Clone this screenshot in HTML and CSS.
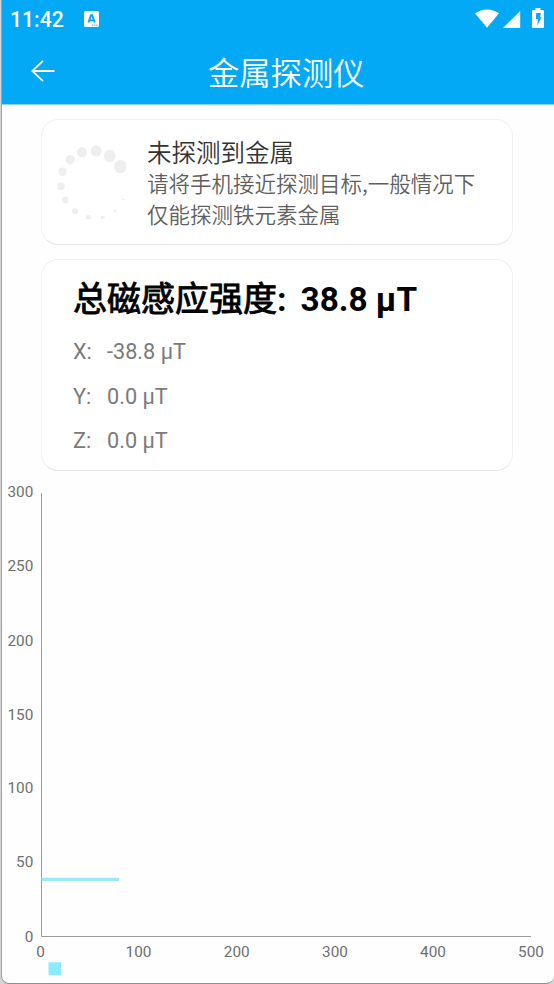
FILE: index.html
```html
<!DOCTYPE html>
<html lang="zh-CN">
<head>
    <meta charset="UTF-8">
    <meta name="viewport" content="width=device-width, initial-scale=1.0">
    <title>金属探测仪</title>
    <link rel="stylesheet" href="styles.css">
</head>
<body>
    <div class="phone">
        <header class="header">
            <div class="status-bar">
                <span class="clock">11:42</span>
                <svg class="icon-notice" width="15" height="16" viewBox="0 0 15 16">
                    <rect width="15" height="16" rx="1.5" fill="#fff"/>
                    <path d="M4.4 11.5 7 4.3h1.2l2.6 7.2M5.4 9.4h4.4" fill="none" stroke="#03a9f4" stroke-width="1.9"/>
                    <path d="M8 14.2h1.3M10.2 14.2h1.3M12.3 14.2h1.3" stroke="#03a9f4" stroke-width="1"/>
                </svg>
                <div class="status-icons">
                    <svg width="70" height="22" viewBox="0 0 70 22">
                        <path d="M0 5.3C7 .2 17 .2 24 5.3L12 19.7z" fill="#fff"/>
                        <path d="M28 20 45.2 3V20z" fill="#fff"/>
                        <path d="M58 2h2.5V0h5v2H68q1 0 1 1v16q0 1-1 1h-10q-1 0-1-1V3q0-1 1-1z" fill="#fff"/>
                        <path d="M61.2 5h4.8l-1.2 4.3h1.7L62.3 17.5l.6-6.5h-2z" fill="#03a9f4"/>
                    </svg>
                </div>
            </div>
            <div class="title-bar">
                <svg class="icon-back" width="24" height="22" viewBox="0 0 24 22">
                    <path d="M12 .8 1.3 11 12 21.2M1.3 11H23.5" fill="none" stroke="#fff" stroke-width="1.8"/>
                </svg>
                <h1 class="title">金属探测仪</h1>
            </div>
        </header>

        <main class="content">
            <section class="card card-status">
                <svg class="spinner" width="72" height="76" viewBox="0 0 72 76">
                    <g fill="#eee">
                        <ellipse cx="63.3" cy="21.5" rx="6.2" ry="6.7"/>
                        <ellipse cx="52.7" cy="11" rx="5.8" ry="6.2"/>
                        <ellipse cx="39.2" cy="6" rx="5.4" ry="5.8"/>
                        <ellipse cx="25" cy="7.3" rx="5" ry="5.3"/>
                        <ellipse cx="13.2" cy="14.7" rx="4.5" ry="4.8"/>
                        <ellipse cx="5.5" cy="26.7" rx="4" ry="4.3"/>
                        <ellipse cx="4" cy="41.2" rx="3.8" ry="3.8"/>
                        <ellipse cx="8.3" cy="55" rx="3.3" ry="3.4"/>
                        <ellipse cx="18.2" cy="66.3" rx="3" ry="3"/>
                        <ellipse cx="31.2" cy="72.2" rx="2.5" ry="2.2"/>
                        <ellipse cx="45.7" cy="72.2" rx="2" ry="1.8"/>
                        <ellipse cx="58" cy="66" rx="1.4" ry="1.4"/>
                        <ellipse cx="66.4" cy="54.4" rx="1.3" ry=".8"/>
                    </g>
                </svg>
                <div class="status-text">
                    <h2 class="status-title">未探测到金属</h2>
                    <p class="status-desc">请将手机接近探测目标,一般情况下仅能探测铁元素金属</p>
                </div>
            </section>

            <section class="card card-values">
                <div class="total">
                    <span class="total-label">总磁感应强度<b>:</b></span>
                    <span class="total-value">38.8 μT</span>
                </div>
                <div class="axis-row"><span class="axis-name">X:</span><span>-38.8 μT</span></div>
                <div class="axis-row"><span class="axis-name">Y:</span><span>0.0 μT</span></div>
                <div class="axis-row"><span class="axis-name">Z:</span><span>0.0 μT</span></div>
            </section>
        </main>

        <svg class="chart" width="552" height="505" viewBox="2 478 552 505">
            <path d="M41.5 493V936.5H531" fill="none" stroke="#9b9b9b" stroke-width="1"/>
            <g text-anchor="end">
                <text x="33.3" y="497.3">300</text>
                <text x="33.3" y="571.3">250</text>
                <text x="33.3" y="645.5">200</text>
                <text x="33.3" y="719.5">150</text>
                <text x="33.3" y="793.4">100</text>
                <text x="33.3" y="867.3">50</text>
                <text x="33.3" y="941.5">0</text>
            </g>
            <g text-anchor="middle">
                <text x="40.5" y="957.2">0</text>
                <text x="138.5" y="957.2">100</text>
                <text x="236.7" y="957.2">200</text>
                <text x="335" y="957.2">300</text>
                <text x="433" y="957.2">400</text>
                <text x="531" y="957.2">500</text>
            </g>
            <path d="M41.5 879.4H119" stroke="#9ae9fb" stroke-width="3.2"/>
            <rect x="48.5" y="962.3" width="12.5" height="12.7" fill="#8ceaff"/>
        </svg>
    </div>
</body>
</html>
```

FILE: styles.css
```css
* {
    box-sizing: border-box;
    margin: 0;
    padding: 0;
}

body {
    background: #d4d4d4;
    font-family: Roboto, "Noto Sans CJK SC", sans-serif;
}

.phone {
    height: 984px;
    margin-left: 1px;
    border-left: 1px solid #a2a2a2;
    border-bottom: 1px solid #8f8f8f;
    border-radius: 0 0 8px 8px;
    background: #fefefe;
    overflow: hidden;
}

.header {
    height: 105px;
    background: #03a9f4;
    border-bottom: 1px solid #8fd4f5;
    color: #fff;
}

.status-bar {
    display: flex;
    align-items: center;
    height: 38px;
    padding: 0 9px 0 8px;
}

.clock {
    width: 75px;
    padding-top: 1px;
    font-size: 21.2px;
    font-weight: 500;
    line-height: 38px;
}

.icon-notice {
    margin-left: -1px;
}

.status-icons {
    display: flex;
    margin: -1px 0 0 auto;
}

.title-bar {
    display: flex;
    align-items: center;
    height: 66px;
    padding-left: 29px;
}

.title {
    margin-left: 153px;
    padding-top: 2px;
    font-family: "Noto Sans CJK SC", sans-serif;
    font-size: 31.3px;
    font-weight: 350;
    line-height: 60px;
}

.content {
    display: flex;
    flex-direction: column;
    gap: 14px;
    padding: 14px 41px 0 39px;
}

.card {
    border: 1px solid #f1f1f1;
    border-bottom-color: #e6e6e6;
    border-radius: 17px;
    background: #fff;
}

.card-status {
    display: flex;
    height: 126px;
    padding: 16px 30px 0 15px;
}

.spinner {
    flex: none;
    margin-top: 9px;
}

.status-text {
    margin-left: 18px;
    font-family: "Noto Sans CJK SC", sans-serif;
}

.status-title {
    color: #333;
    font-size: 24.5px;
    font-weight: 350;
    line-height: 31px;
}

.status-desc {
    width: 335px;
    color: #5f5f5f;
    font-size: 21.5px;
    font-weight: 350;
    line-height: 31px;
}

.card-values {
    height: 212px;
    padding: 15px 31px 0;
}

.total {
    display: flex;
    gap: 14px;
    margin-bottom: 6px;
    color: #000;
    font-size: 34px;
    line-height: 49px;
}

/* synthetic bold for the Chinese label */
.total-label {
    -webkit-text-stroke: 0.9px #000;
}

.total-label b {
    -webkit-text-stroke: 0;
}

.total-value {
    font-size: 33.3px;
    font-weight: 700;
}

.axis-row {
    display: flex;
    color: #7a7a7a;
    font-size: 21.7px;
    line-height: 44.5px;
}

.axis-name {
    width: 34px;
}

.chart {
    display: block;
    margin-top: 7px;
}

.chart text {
    fill: #6e6e6e;
    font-size: 15.3px;
}
```
